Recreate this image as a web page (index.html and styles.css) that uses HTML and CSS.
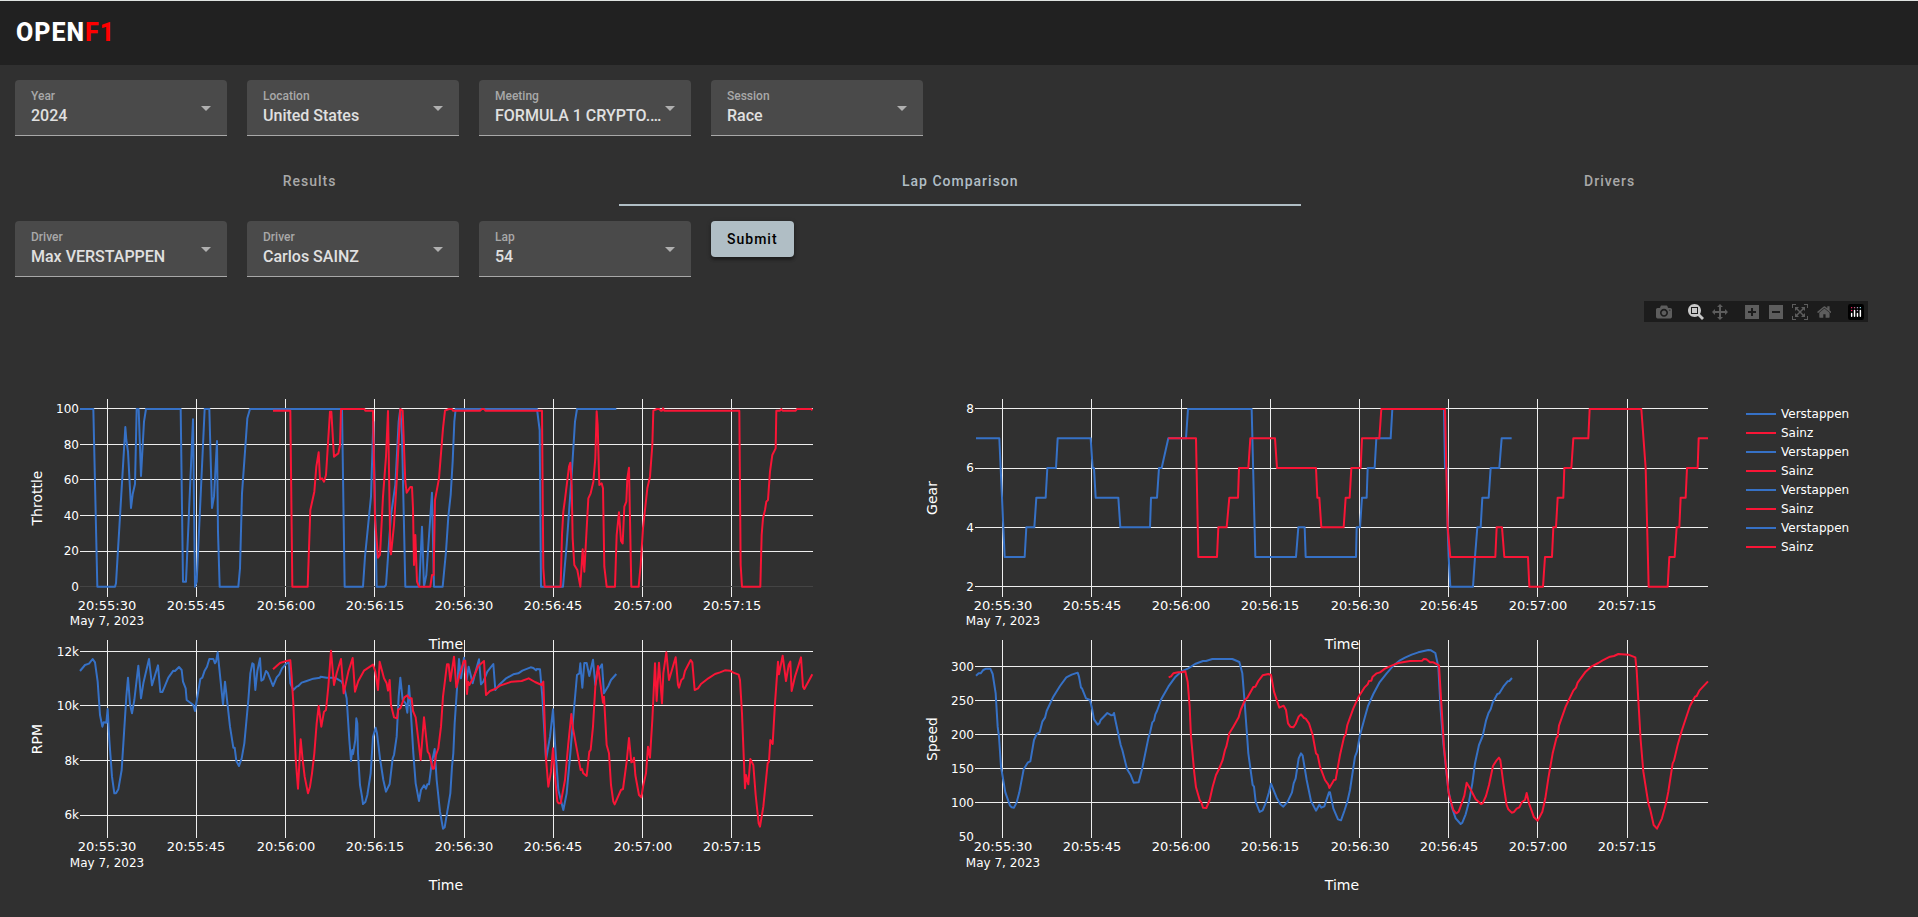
FILE: index.html
```html
<!DOCTYPE html>
<html lang="en">
<head>
<meta charset="utf-8">
<meta name="viewport" content="width=device-width, initial-scale=1">
<title>OpenF1</title>
<link rel="stylesheet" href="styles.css">
</head>
<body>
<header class="topbar"><h1 class="brand">OPEN<span class="brand-accent">F1</span></h1></header>
<main>
<form class="filters" aria-label="Session filters">
  <div class="field"><label for="year">Year</label><select id="year"><option>2024</option></select><svg class="caret" viewBox="0 0 10 5"><path d="M0 0h10L5 5z"/></svg></div>
  <div class="field"><label for="location">Location</label><select id="location"><option>United States</option></select><svg class="caret" viewBox="0 0 10 5"><path d="M0 0h10L5 5z"/></svg></div>
  <div class="field"><label for="meeting">Meeting</label><select id="meeting"><option>FORMULA 1 CRYPTO.COM MIAMI GRAND PRIX 2024</option></select><svg class="caret" viewBox="0 0 10 5"><path d="M0 0h10L5 5z"/></svg></div>
  <div class="field"><label for="session">Session</label><select id="session"><option>Race</option></select><svg class="caret" viewBox="0 0 10 5"><path d="M0 0h10L5 5z"/></svg></div>
</form>
<div class="tabs" role="tablist">
  <button class="tab" role="tab" aria-selected="false">Results</button>
  <button class="tab tab-active" role="tab" aria-selected="true">Lap Comparison</button>
  <button class="tab" role="tab" aria-selected="false">Drivers</button>
</div>
<form class="filters" aria-label="Lap filters">
  <div class="field"><label for="driver1">Driver</label><select id="driver1"><option>Max VERSTAPPEN</option></select><svg class="caret" viewBox="0 0 10 5"><path d="M0 0h10L5 5z"/></svg></div>
  <div class="field"><label for="driver2">Driver</label><select id="driver2"><option>Carlos SAINZ</option></select><svg class="caret" viewBox="0 0 10 5"><path d="M0 0h10L5 5z"/></svg></div>
  <div class="field"><label for="lap">Lap</label><select id="lap"><option>54</option></select><svg class="caret" viewBox="0 0 10 5"><path d="M0 0h10L5 5z"/></svg></div>
  <button class="submit" type="button">Submit</button>
</form>
<section class="chart">
  <div class="modebar">
    <div class="modebar-group">
      <button aria-label="Download plot as a png"><svg viewBox="0 0 1000 1000"><path transform="matrix(1 0 0 -1 0 850)" d="m500 450c-83 0-150-67-150-150 0-83 67-150 150-150 83 0 150 67 150 150 0 83-67 150-150 150z m400 150h-120c-16 0-34 13-39 29l-31 93c-6 15-23 28-40 28h-340c-16 0-34-13-39-28l-31-94c-6-15-23-28-40-28h-120c-55 0-100-45-100-100v-450c0-55 45-100 100-100h800c55 0 100 45 100 100v450c0 55-45 100-100 100z m-400-550c-138 0-250 112-250 250 0 138 112 250 250 250 138 0 250-112 250-250 0-138-112-250-250-250z m365 380c-19 0-35 16-35 35 0 19 16 35 35 35 19 0 35-16 35-35 0-19-16-35-35-35z"/></svg></button>
    </div>
    <div class="modebar-group">
      <button class="mode-on" aria-label="Zoom"><svg viewBox="0 0 1000 1000"><path transform="matrix(1 0 0 -1 0 850)" d="m1000-25l-250 251c40 63 63 138 63 218 0 224-182 406-407 406-224 0-406-182-406-406s183-406 407-406c80 0 155 22 218 62l250-250 125 125z m-812 250l0 438 437 0 0-438-437 0z m62 375l313 0 0-312-313 0 0 312z"/></svg></button>
      <button aria-label="Pan"><svg viewBox="0 0 1000 1000"><path transform="matrix(1 0 0 -1 0 850)" d="m1000 350l-187 188 0-125-250 0 0 250 125 0-188 187-187-187 125 0 0-250-250 0 0 125-188-188 186-187 0 125 252 0 0-250-125 0 187-188 188 188-125 0 0 250 250 0 0-126 187 188z"/></svg></button>
    </div>
    <div class="modebar-group">
      <button aria-label="Zoom in"><svg viewBox="0 0 875 1000"><path transform="matrix(1 0 0 -1 0 850)" d="m1 787l0-875 875 0 0 875-875 0z m687-500l-187 0 0-187-125 0 0 187-188 0 0 125 188 0 0 187 125 0 0-187 187 0 0-125z"/></svg></button>
      <button aria-label="Zoom out"><svg viewBox="0 0 875 1000"><path transform="matrix(1 0 0 -1 0 850)" d="m0 788l0-876 875 0 0 876-875 0z m688-500l-500 0 0 125 500 0 0-125z"/></svg></button>
      <button aria-label="Autoscale"><svg viewBox="0 0 1000 1000"><path transform="matrix(1 0 0 -1 0 850)" d="m250 850l-187 0-63 0 0-62 0-188 63 0 0 188 187 0 0 62z m688 0l-188 0 0-62 188 0 0-188 62 0 0 188 0 62-62 0z m-875-938l0 188-63 0 0-188 0-62 63 0 187 0 0 62-187 0z m875 188l0-188-188 0 0-62 188 0 62 0 0 62 0 188-62 0z m-125 188l-1 0-93-94-156 156 156 156 92-93 2 0 0 250-250 0 0-2 93-92-156-156-156 156 94 92 0 2-250 0 0-250 0 0 93 93 157-156-157-156-93 94 0 0 0-250 250 0 0 0-94 93 156 157 156-157-93-93 0 0 250 0 0 250z"/></svg></button>
      <button aria-label="Reset axes"><svg viewBox="0 0 929 1000"><path transform="matrix(1 0 0 -1 0 850)" d="m786 296v-267q0-15-11-26t-25-10h-214v214h-143v-214h-214q-15 0-25 10t-11 26v267q0 1 0 2t0 2l321 264 321-264q1-1 1-4z m124 39l-34-41q-5-5-12-6h-2q-7 0-12 3l-386 322-386-322q-7-4-13-4-7 2-12 7l-35 41q-4 5-3 13t6 12l401 334q18 15 42 15t43-15l136-114v109q0 8 5 13t13 5h107q8 0 13-5t5-13v-227l122-102q5-5 6-12t-4-13z"/></svg></button>
    </div>
    <div class="modebar-group">
      <button class="mode-logo" aria-label="Produced with Plotly"><svg viewBox="0 0 132 132"><rect width="132" height="132" rx="18" fill="#000"/><circle cx="102" cy="30" r="6" fill="#9ef"/><circle cx="78" cy="30" r="6" fill="#bac"/><circle cx="78" cy="54" r="6" fill="#bac"/><circle cx="54" cy="30" r="6" fill="#d69"/><circle cx="30" cy="30" r="6" fill="#f26"/><circle cx="30" cy="54" r="6" fill="#f26"/><path fill="none" stroke="#fff" stroke-width="12" stroke-linecap="round" d="M30 78v24M54 54v48M78 78v24M102 54v48"/></svg></button>
    </div>
  </div>
  <svg class="plot" viewBox="0 285 1918 625" role="img" aria-label="Throttle, gear, RPM and speed by time">
    <g class="grid">
      <path d="M107.500 399V597M196.500 399V597M285.500 399V597M374.500 399V597M464.500 399V597M553.500 399V597M642.500 399V597M731.500 399V597"/>
      <path d="M80 408.500H813M80 444.500H813M80 479.500H813M80 515.500H813M80 551.500H813"/>
      <path class="zero" d="M80 586.500H813"/>
      <path d="M1002.500 399V597M1091.500 399V597M1181.500 399V597M1270.500 399V597M1359.500 399V597M1448.500 399V597M1537.500 399V597M1627.500 399V597"/>
      <path d="M975 408.500H1708M975 468.500H1708M975 527.500H1708M975 586.500H1708"/>
      <path d="M107.500 640V838M196.500 640V838M285.500 640V838M374.500 640V838M464.500 640V838M553.500 640V838M642.500 640V838M731.500 640V838"/>
      <path d="M80 651.500H813M80 705.500H813M80 760.500H813M80 815.500H813"/>
      <path d="M1002.500 640V838M1091.500 640V838M1181.500 640V838M1270.500 640V838M1359.500 640V838M1448.500 640V838M1537.500 640V838M1627.500 640V838"/>
      <path d="M975 666.500H1708M975 700.500H1708M975 734.500H1708M975 768.500H1708M975 802.500H1708"/>
    </g>
    <!-- Throttle -->
    <g class="series" transform="translate(30 385) scale(.33333)">
      <polyline class="ver" points="150,72 190,72 202,605 255,605 258,595 286,126 289,165 294,200 303,369 308,328 315,297 320,72 326,72 333,273 342,110 348,72 452,72 459,590 468,590 489,103 495,605 500,590 524,72 538,72 546,369 552,335 561,168 564,440 569,605 625,605 630,550 636,325 645,200 652,100 660,72 936,72 944,605 999,605 1005,515 1023,335 1030,110 1040,605 1064,605 1068,600 1083,390 1096,300 1106,110 1111,72 1116,150 1126,605 1165,605 1168,600 1176,425 1182,605 1189,570 1206,323 1212,605 1238,605 1248,500 1255,395 1262,330 1268,230 1273,110 1277,72 1521,72 1529,135 1533,605 1599,605 1610,480 1625,270 1635,110 1641,72 1759,72"/>
      <polyline class="sai" points="729,77 781,77 787,605 833,605 841,375 853,320 859,245 866,202 870,283 876,280 882,290 888,270 900,80 904,80 912,215 925,205 930,180 933,72 1003,72 1006,77 1029,77 1035,400 1044,518 1050,510 1059,335 1068,215 1074,78 1081,495 1083,508 1092,420 1100,290 1111,72 1118,77 1126,290 1130,323 1141,306 1146,306 1149,370 1152,540 1156,450 1161,590 1167,605 1201,605 1206,570 1211,570 1215,345 1227,280 1239,130 1245,77 1257,72 1266,72 1269,77 1350,77 1356,72 1362,72 1366,77 1536,77 1540,550 1544,605 1592,605 1596,450 1600,380 1606,335 1617,245 1621,233 1625,300 1628,460 1633,540 1642,555 1651,605 1658,493 1663,560 1675,340 1682,325 1690,290 1696,220 1700,79 1703,120 1708,300 1715,295 1719,310 1723,545 1730,605 1755,605 1760,450 1767,382 1773,468 1778,475 1783,365 1789,350 1792,280 1797,248 1804,605 1826,605 1832,540 1839,430 1852,310 1860,275 1867,180 1870,77 1881,72 1888,72 1892,77 1896,77 1899,70 1903,77 2128,77 2132,540 2136,605 2191,605 2195,450 2199,400 2205,375 2209,350 2214,345 2220,260 2227,210 2237,190 2239,77 2250,77 2254,72 2258,77 2297,77 2301,72 2344,72 2347,76"/>
    </g>
    <!-- Gear -->
    <g class="series" transform="translate(910 385) scale(.33333)">
      <polyline class="ver" points="198,160 268,160 284,516 344,516 349,427 373,427 379,338 407,338 412,249 438,249 443,160 542,160 548,249 552,249 557,338 625,338 631,427 720,427 723,338 741,338 747,249 755,249 775,160 828,160 834,72 1025,72 1036,516 1158,516 1165,427 1184,427 1187,516 1338,516 1340,427 1350,427 1356,338 1370,338 1373,249 1394,249 1399,160 1442,160 1447,72 1602,72 1605,249 1610,249 1613,427 1616,516 1621,605 1689,605 1695,516 1702,427 1712,427 1717,338 1736,338 1742,249 1768,249 1775,160 1805,160"/>
      <polyline class="sai" points="775,160 858,160 865,516 921,516 925,427 950,427 958,338 984,338 987,249 1015,249 1021,160 1095,160 1101,249 1218,249 1222,338 1228,338 1234,427 1301,427 1307,338 1319,338 1324,249 1352,249 1356,160 1408,160 1414,72 1605,72 1613,427 1621,516 1756,516 1760,427 1776,427 1783,516 1854,516 1858,605 1899,605 1905,516 1926,516 1930,427 1938,427 1943,338 1960,338 1963,249 1984,249 1990,160 2035,160 2039,72 2194,72 2207,249 2216,605 2273,605 2278,516 2294,516 2300,427 2308,427 2312,338 2327,338 2331,249 2363,249 2366,160 2394,160"/>
    </g>
    <!-- RPM -->
    <g class="series" transform="translate(30 630) scale(.33333)">
      <polyline class="ver" points="150,123 165,105 177,101 188,87 195,97 203,155 210,255 217,290 221,277 229,278 233,237 238,330 246,440 253,490 258,490 265,478 275,420 282,310 289,200 294,143 300,222 306,250 313,210 325,107 333,205 340,160 357,87 366,166 384,106 391,186 397,186 403,172 415,143 430,122 435,123 447,111 455,120 459,155 467,175 470,210 490,225 495,243 503,195 511,147 517,143 524,122 531,110 538,87 550,87 555,100 558,95 563,67 579,223 585,155 600,290 610,353 614,353 619,393 627,408 635,385 643,340 655,210 661,130 667,100 671,103 676,180 682,123 690,85 694,152 700,148 708,123 713,128 729,168 740,142 748,133 756,115 768,102 777,97 781,160 790,180 800,170 805,168 815,158 830,153 850,146 870,143 872,140 890,143 915,143 935,155 942,170 950,205 958,330 963,393 967,360 969,372 976,330 979,265 982,280 984,370 990,465 996,500 999,522 1006,516 1012,495 1022,430 1029,320 1037,293 1041,310 1050,385 1060,450 1068,485 1079,462 1088,385 1092,375 1100,320 1106,200 1111,143 1118,210 1127,220 1132,248 1137,167 1141,220 1150,370 1157,460 1167,513 1173,480 1182,466 1188,476 1192,463 1197,463 1205,400 1214,357 1220,450 1230,545 1239,596 1244,592 1261,490 1266,410 1270,370 1274,280 1287,87 1293,145 1302,83 1310,150 1316,110 1328,160 1338,120 1347,88 1353,163 1360,155 1372,125 1390,102 1396,180 1407,165 1427,146 1450,133 1465,130 1477,122 1502,112 1510,114 1518,121 1520,117 1530,118 1537,200 1548,390 1560,320 1569,238 1575,340 1585,480 1600,540 1610,490 1621,370 1630,260 1641,135 1648,130 1651,100 1657,173 1663,99 1670,99 1678,138 1689,89 1696,165 1702,125 1716,103 1722,190 1735,168 1743,150 1759,132"/>
      <polyline class="sai" points="729,118 750,99 765,94 781,91 785,140 790,220 797,385 804,476 812,328 818,390 824,440 834,490 840,470 846,430 853,370 860,280 866,228 874,290 882,245 888,240 895,170 903,62 912,165 920,130 933,87 941,190 955,125 968,84 975,185 985,153 1002,122 1020,110 1029,104 1036,125 1044,180 1049,95 1062,145 1070,160 1074,182 1079,150 1083,225 1092,262 1101,265 1105,238 1111,235 1123,202 1132,196 1138,205 1145,205 1149,243 1157,262 1172,390 1182,262 1193,365 1198,372 1208,416 1212,416 1218,375 1225,355 1233,290 1239,200 1251,103 1256,103 1261,153 1272,80 1279,172 1290,130 1302,92 1306,92 1311,192 1314,155 1318,165 1330,143 1345,108 1362,93 1368,195 1380,183 1395,177 1410,167 1445,155 1475,153 1496,145 1515,156 1535,165 1540,155 1548,385 1555,470 1563,425 1569,355 1575,440 1582,515 1586,520 1592,520 1605,450 1615,340 1624,252 1629,295 1640,355 1652,420 1656,417 1660,430 1670,438 1678,365 1682,360 1689,290 1696,170 1704,108 1711,160 1719,218 1722,200 1730,345 1737,370 1743,465 1750,515 1754,523 1773,480 1779,477 1790,395 1797,324 1804,397 1809,395 1812,383 1816,435 1827,495 1834,502 1840,465 1848,430 1854,350 1860,383 1867,270 1875,100 1880,213 1887,98 1896,220 1900,130 1909,67 1917,150 1937,82 1944,165 1947,173 1954,150 1960,145 1965,123 1982,90 1987,97 1994,180 2004,175 2013,162 2035,145 2055,132 2070,127 2085,121 2100,122 2110,128 2126,134 2130,150 2136,250 2145,475 2148,435 2155,463 2161,387 2170,405 2177,495 2186,580 2190,590 2200,530 2213,400 2217,395 2221,330 2228,342 2235,220 2244,95 2247,133 2258,77 2268,153 2276,105 2281,95 2285,183 2295,140 2313,82 2319,170 2323,177 2335,155 2347,133"/>
    </g>
    <!-- Speed -->
    <g class="series" transform="translate(910 630) scale(.33333)">
      <polyline class="ver" points="198,137 206,130 212,130 220,120 228,116 241,116 248,132 257,190 263,290 267,320 273,410 286,487 300,527 305,532 312,533 320,517 328,487 341,418 354,397 361,394 372,330 380,312 389,307 397,275 405,263 410,243 430,200 450,168 469,142 485,134 503,128 507,140 513,173 516,175 528,205 540,210 546,235 552,268 563,284 568,280 572,270 592,249 604,256 609,255 612,249 616,270 632,345 637,360 651,417 662,435 671,458 686,457 697,413 715,325 720,308 727,277 732,272 736,253 741,243 754,207 775,170 795,142 815,124 835,115 855,102 879,93 888,93 907,87 967,87 988,96 997,130 1003,205 1010,300 1015,370 1028,465 1032,470 1037,515 1049,546 1058,541 1068,517 1077,487 1083,461 1100,503 1111,523 1120,530 1133,515 1146,487 1151,460 1157,445 1166,385 1173,370 1178,377 1190,450 1203,513 1218,542 1228,524 1234,533 1243,529 1257,487 1260,487 1270,535 1284,568 1293,571 1303,543 1312,515 1320,480 1335,380 1341,365 1350,315 1365,260 1374,228 1390,192 1408,158 1430,130 1450,107 1470,91 1485,83 1505,74 1525,67 1555,60 1563,61 1576,69 1585,110 1592,240 1600,340 1615,480 1625,530 1637,565 1652,582 1657,578 1667,553 1677,515 1687,460 1695,400 1707,345 1718,318 1728,272 1736,248 1742,238 1748,218 1762,192 1768,190 1780,170 1793,154 1798,153 1806,144"/>
      <polyline class="sai" points="776,142 783,139 790,130 805,127 815,127 826,124 833,155 839,230 843,320 853,430 858,472 869,510 874,517 879,533 889,534 899,510 908,470 918,435 927,417 938,390 945,360 949,350 958,310 970,290 986,262 992,240 1005,210 1012,203 1030,171 1036,170 1045,153 1058,136 1075,132 1083,135 1092,185 1108,233 1121,227 1128,240 1134,280 1141,290 1150,292 1157,282 1166,260 1173,253 1182,264 1187,266 1197,280 1208,315 1218,370 1223,375 1230,410 1245,450 1255,464 1258,474 1272,450 1277,449 1290,375 1302,322 1307,313 1312,285 1330,235 1345,202 1363,173 1373,163 1377,153 1384,152 1388,140 1400,130 1410,127 1425,116 1445,107 1465,99 1500,93 1537,92 1541,87 1549,88 1560,97 1570,97 1587,106 1594,220 1602,350 1616,490 1630,540 1639,550 1646,545 1655,520 1663,497 1670,458 1680,475 1697,508 1704,514 1713,522 1718,520 1728,498 1737,465 1749,408 1759,392 1767,383 1771,390 1780,460 1790,525 1795,538 1805,548 1812,546 1820,536 1828,532 1836,516 1845,510 1850,489 1857,520 1872,562 1883,572 1897,545 1906,505 1915,445 1928,370 1940,322 1943,320 1947,287 1967,230 1990,182 1998,173 2003,158 2027,125 2045,109 2065,99 2078,91 2100,80 2112,78 2125,72 2155,74 2176,82 2180,120 2185,210 2192,330 2200,425 2215,520 2221,540 2231,585 2241,596 2256,565 2268,520 2275,485 2288,400 2292,392 2303,345 2315,303 2340,228 2355,200 2360,198 2368,182 2394,154"/>
    </g>
    <g class="ytick">
      <text x="79" y="413">100</text><text x="79" y="449">80</text><text x="79" y="484">60</text><text x="79" y="520">40</text><text x="79" y="555">20</text><text x="79" y="591">0</text>
      <text x="974" y="413">8</text><text x="974" y="472">6</text><text x="974" y="532">4</text><text x="974" y="591">2</text>
      <text x="79" y="656">12k</text><text x="79" y="710">10k</text><text x="79" y="765">8k</text><text x="79" y="819">6k</text>
      <text x="974" y="671">300</text><text x="974" y="705">250</text><text x="974" y="739">200</text><text x="974" y="773">150</text><text x="974" y="807">100</text><text x="974" y="841">50</text>
    </g>
    <g class="xtick">
      <text x="107" y="610">20:55:30</text><text x="196" y="610">20:55:45</text><text x="286" y="610">20:56:00</text><text x="375" y="610">20:56:15</text><text x="464" y="610">20:56:30</text><text x="553" y="610">20:56:45</text><text x="643" y="610">20:57:00</text><text x="732" y="610">20:57:15</text>
      <text x="1003" y="610">20:55:30</text><text x="1092" y="610">20:55:45</text><text x="1181" y="610">20:56:00</text><text x="1270" y="610">20:56:15</text><text x="1360" y="610">20:56:30</text><text x="1449" y="610">20:56:45</text><text x="1538" y="610">20:57:00</text><text x="1627" y="610">20:57:15</text>
      <text x="107" y="851">20:55:30</text><text x="196" y="851">20:55:45</text><text x="286" y="851">20:56:00</text><text x="375" y="851">20:56:15</text><text x="464" y="851">20:56:30</text><text x="553" y="851">20:56:45</text><text x="643" y="851">20:57:00</text><text x="732" y="851">20:57:15</text>
      <text x="1003" y="851">20:55:30</text><text x="1092" y="851">20:55:45</text><text x="1181" y="851">20:56:00</text><text x="1270" y="851">20:56:15</text><text x="1360" y="851">20:56:30</text><text x="1449" y="851">20:56:45</text><text x="1538" y="851">20:57:00</text><text x="1627" y="851">20:57:15</text>
    </g>
    <g class="date">
      <text x="107" y="625">May 7, 2023</text><text x="1003" y="625">May 7, 2023</text><text x="107" y="867">May 7, 2023</text><text x="1003" y="867">May 7, 2023</text>
    </g>
    <g class="axis-title">
      <text x="446" y="649">Time</text><text x="1342" y="649">Time</text><text x="446" y="890">Time</text><text x="1342" y="890">Time</text>
      <text transform="translate(42 498) rotate(-90)">Throttle</text><text transform="translate(937 498) rotate(-90)">Gear</text><text transform="translate(42 739) rotate(-90)">RPM</text><text transform="translate(937 739) rotate(-90)">Speed</text>
    </g>
    <g class="legend">
      <path class="ver" d="M1746 414h30M1746 452h30M1746 490h30M1746 528h30"/>
      <path class="sai" d="M1746 433h30M1746 471h30M1746 509h30M1746 547h30"/>
      <text x="1781" y="418">Verstappen</text><text x="1781" y="437">Sainz</text><text x="1781" y="456">Verstappen</text><text x="1781" y="475">Sainz</text><text x="1781" y="494">Verstappen</text><text x="1781" y="513">Sainz</text><text x="1781" y="532">Verstappen</text><text x="1781" y="551">Sainz</text>
    </g>
  </svg>
</section>
</main>
</body>
</html>
```
FILE: styles.css
```css
* { box-sizing: border-box; }
body {
  margin: 0;
  background: #303030;
  color: #fff;
  font-family: Roboto, "Liberation Sans", sans-serif;
}
button, select { font-family: inherit; }
.topbar {
  display: flex;
  align-items: center;
  height: 65px;
  padding: 0 16px;
  background: #212121;
  border-top: 1px solid #dfe3e1;
}
.brand { margin: 0; font-size: 25px; font-weight: 800; letter-spacing: 1px; line-height: 32px; }
.brand-accent { color: #f00; }

.filters { display: flex; flex-wrap: wrap; align-items: flex-start; gap: 20px; padding: 15px; }
.field { position: relative; width: 212px; }
.field label {
  position: absolute;
  top: 8px;
  left: 16px;
  color: #a8a8a8;
  font-size: 12px;
  font-weight: 500;
  line-height: 16px;
  pointer-events: none;
}
.field select {
  display: block;
  width: 100%;
  height: 56px;
  padding: 16px 28px 0 16px;
  appearance: none;
  border: 0;
  border-bottom: 1px solid #a8a8a8;
  border-radius: 4px 4px 0 0;
  background: #4a4a4a;
  color: #e0e0e0;
  font-size: 16px;
  font-weight: 500;
  text-overflow: ellipsis;
}
.caret { position: absolute; top: 26px; right: 16px; width: 10px; height: 5px; fill: #b0b0b0; pointer-events: none; }

.tabs { display: flex; margin-top: 7px; }
.tab {
  flex: 1 1 auto;
  height: 48px;
  padding: 0;
  border: 0;
  border-bottom: 2px solid transparent;
  background: none;
  color: #a8a8a8;
  font-size: 14px;
  font-weight: 500;
  letter-spacing: 1px;
}
.tab-active { border-bottom-color: #b0bec5; color: #b0bec5; }
.submit {
  height: 36px;
  padding: 0 16px;
  border: 0;
  border-radius: 4px;
  background: #b0bec5;
  box-shadow: 0 3px 3px rgba(0, 0, 0, .3), 0 1px 5px rgba(0, 0, 0, .2);
  color: #000;
  font-size: 14px;
  font-weight: 500;
  letter-spacing: 1px;
}

.chart { position: relative; margin-top: -7px; }
.modebar { position: absolute; top: 16px; right: 50px; display: flex; background: #1c1c1c; }
.modebar-group { display: flex; padding-left: 8px; }
.modebar button {
  display: flex;
  align-items: center;
  justify-content: center;
  width: 24px;
  height: 21px;
  padding: 0;
  border: 0;
  background: none;
  fill: #5d5d5d;
}
.modebar .mode-on { fill: #c8c8c8; }
.modebar svg { height: 16px; }

.plot { display: block; width: 100%; height: auto; font-family: Verdana, "DejaVu Sans", sans-serif; fill: #fff; font-size: 12px; }
.grid path { fill: none; stroke: #eee; stroke-width: 1px; }
.grid .zero { stroke: #444; }
.series polyline { fill: none; stroke-width: 6px; stroke-linejoin: round; }
.ver { stroke: #3671c6; }
.sai { stroke: #f91536; }
.legend path { stroke-width: 2px; }
.ytick { text-anchor: end; }
.xtick { text-anchor: middle; font-size: 13px; }
.date { text-anchor: middle; }
.axis-title { text-anchor: middle; font-size: 14px; }
```
